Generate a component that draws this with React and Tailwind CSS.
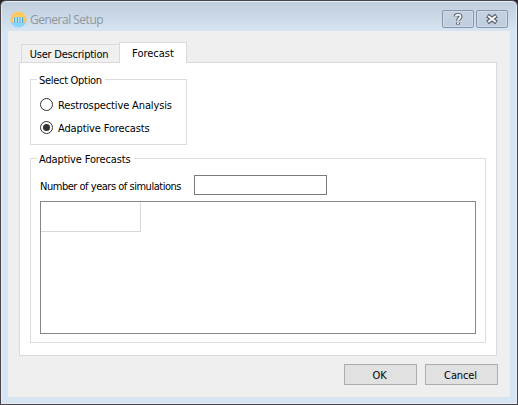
function Radio({ label, checked }) {
  return (
    <label className="flex h-[23px] items-center">
      <span className="flex size-[13px] shrink-0 items-center justify-center rounded-full border border-[#333] bg-white">
        {checked && <span className="size-[7px] rounded-full bg-[#333]" />}
      </span>
      <span className="mt-[2px] ml-[5px]">{label}</span>
    </label>
  );
}

function Group({ title, className, children }) {
  return (
    <section className={"border border-[#dcdcdc] " + className}>
      <h2 className="-mt-[7px] ml-[6px] flex h-[14px] w-fit items-center bg-white pt-px pr-[3px] pl-[2px]">{title}</h2>
      {children}
    </section>
  );
}

function AppIcon() {
  return (
    <svg className="ml-[9px] size-[17px]" viewBox="0 0 17 17">
      <path d="M.5 8.5a8 8 0 0 1 16 0z" fill="#ffc95f" />
      <path d="M.5 8.5a8 8 0 0 0 16 0z" fill="#86d5fb" />
      <path d="M.5 8a8 8 0 0 0 1.2 4.500L3 11V7H.6zM16.500 8a8 8 0 0 1-1.200 4.500L14 11V7h2.400z" fill="#f8c36a" />
      <path d="M3 6h11v6H3z" fill="#86d5fb" />
      <path d="M4.500 6.500v5.500M7.500 6.500v5.500M10 6.500v5.500M12.500 6.500v5.500" stroke="#5fa5c4" />
      <path d="M3.500 6.500v5M6 6.500v5M8.800 6.500v5M11.300 6.500v5" stroke="#d4edf2" strokeWidth=".8" />
    </svg>
  );
}

const caption =
  "flex h-[18px] w-8 items-center justify-center rounded-[2px] border border-[#8995ae] bg-linear-to-b from-[#c5d1df] to-[#bfcedf] shadow-[inset_0_0_0_1px_#d0dbe7]";
const button = "flex h-[21px] w-[73px] items-center justify-center border border-[#adadad] bg-[#e1e1e1] pt-[2px] pr-[2px]";

export default function App() {
  return (
    <div className="h-[405px] w-[518px] bg-[#292327] font-['DejaVu_Sans_Condensed','DejaVu_Sans',sans-serif] text-[11px] leading-[14px] font-stretch-condensed tracking-[-0.13px] whitespace-nowrap text-black">
      <div className="flex h-full flex-col rounded-t-[6px] border border-[#484449] bg-[#d7e4f2] bg-linear-to-b from-[#bfcddc] to-[#d7e4f2] to-[30px] shadow-[inset_0_0_0_1px_#e4edf6]">
        <header className="flex h-[30px] shrink-0 items-start pt-[10px] pr-[9px]">
          <AppIcon />
          <h1 className="mt-[2px] ml-[3px] font-['Open_Sans','Noto_Sans',sans-serif] text-[12px] font-stretch-normal tracking-[-0.5px] text-[#8f969d]">
            General Setup
          </h1>
          <div className="-mt-px ml-auto flex gap-[2px]">
            <button className={caption} aria-label="Help">
              <svg className="size-[14px]" viewBox="0 0 14 14" fill="none">
                <path d="M4.500 4.500C4.500 2.200 9.500 2.200 9.500 4.700C9.500 6.500 7 6.300 7 8.700M7 10.500v2" stroke="#525966" strokeWidth="3.800" />
                <path d="M4.500 4.500C4.500 2.200 9.500 2.200 9.500 4.700C9.500 6.500 7 6.300 7 8.700M7 10.500v1.500" stroke="#f5f5f5" strokeWidth="1.900" />
              </svg>
            </button>
            <button className={caption} aria-label="Close">
              <svg className="h-[12px] w-[14px]" viewBox="0 0 14 12" fill="none">
                <path d="M2.500 2.500l9 7M11.500 2.500l-9 7" stroke="#525966" strokeWidth="4.200" />
                <path d="M3.200 3l7.600 6M10.800 3l-7.600 6" stroke="#f5f5f5" strokeWidth="2.200" />
              </svg>
            </button>
          </div>
        </header>

        <main className="mx-[7px] mb-[7px] flex flex-1 flex-col bg-[#efefef] pt-[11px] pl-[11px]">
          <nav className="z-10 flex h-[21px] items-end pl-[2px]">
            <div className="mb-px flex h-[18px] w-[98px] items-center justify-center border border-r-0 border-b-0 border-[#dadada] bg-[#f0f0f0] pt-[2px] pr-[3px] tracking-[-0.22px]">
              User Description
            </div>
            <div className="flex h-[21px] w-[68px] items-center justify-center border border-b-0 border-[#dadada] bg-white pt-px tracking-normal">
              Forecast
            </div>
          </nav>
          <div className="-mt-px h-[294px] w-[478px] border border-[#dadada] bg-white pt-[16px] pl-[10px]">
            <Group title="Select Option" className="h-[66px] w-[157px] [&>h2]:tracking-[-0.3px]">
              <div className="mt-[6px] pl-[9px]">
                <Radio label="Restrospective Analysis" />
                <Radio label="Adaptive Forecasts" checked />
              </div>
            </Group>
            <Group title="Adaptive Forecasts" className="mt-[13px] h-[185px] w-[456px]">
              <div className="mt-[9px] flex items-center pl-[9px]">
                <span className="mt-[3px] w-[154px] tracking-[-0.48px]">Number of years of simulations</span>
                <span className="h-[20px] w-[133px] border border-[#7a7a7a] bg-white" />
              </div>
              <div className="mt-[6px] ml-[9px] h-[133px] w-[436px] border border-[#828790]">
                <div className="h-[30px] w-[100px] border-r border-b border-[#d8d8d8]" />
              </div>
            </Group>
          </div>
          <footer className="mt-[8px] flex gap-[8px] pl-[325px]">
            <button className={button}>OK</button>
            <button className={button}>Cancel</button>
          </footer>
        </main>
      </div>
    </div>
  );
}
